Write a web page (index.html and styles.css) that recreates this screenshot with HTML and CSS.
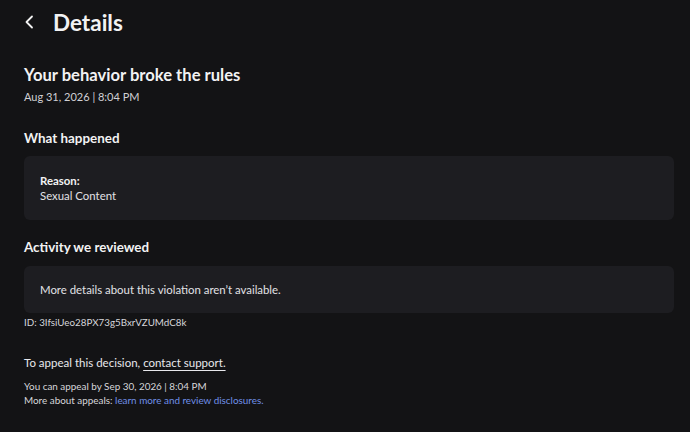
FILE: index.html
```html
<!DOCTYPE html>
<html lang="en">
<head>
<meta charset="utf-8">
<title>Details</title>
<link rel="stylesheet" href="styles.css">
</head>
<body>
<div class="page">
  <header class="topbar">
    <button class="back" aria-label="Back">
      <svg width="10" height="14" viewBox="0 0 10 14"><path d="M8 1.5 L2.5 7 L8 12.5" fill="none" stroke="#f2f2f2" stroke-width="1.8" stroke-linecap="round" stroke-linejoin="round"/></svg>
    </button>
    <h1 class="title">Details</h1>
  </header>

  <section class="summary">
    <h2 class="headline">Your behavior broke the rules</h2>
    <div class="date">Aug 31, 2026 | 8:04 PM</div>
  </section>

  <section class="block first">
    <h3 class="section-title">What happened</h3>
    <div class="card card-reason">
      <div class="label">Reason:</div>
      <div class="value">Sexual Content</div>
    </div>
  </section>

  <section class="block">
    <h3 class="section-title">Activity we reviewed</h3>
    <div class="card card-activity">More details about this violation aren’t available.</div>
    <div class="id">ID: 3IfsiUeo28PX73g5BxrVZUMdC8k</div>
  </section>

  <section class="appeal">
    <p class="appeal-main">To appeal this decision, <a class="support" href="#">contact support.</a></p>
    <p class="appeal-meta">You can appeal by Sep 30, 2026 | 8:04 PM<br>More about appeals: <a class="learn" href="#">learn more and review disclosures.</a></p>
  </section>
</div>
</body>
</html>
```
FILE: styles.css
```css
html, body {
  margin: 0;
  padding: 0;
  background: #131315;
  color: #f2f2f3;
  font-family: "Lato", "Inter", sans-serif;
}
.page {
  padding: 0 16px 0 24px;
}
.topbar {
  display: flex;
  align-items: center;
  height: 44px;
  gap: 18px;
}
.back {
  background: none;
  border: 0;
  padding: 0;
  display: flex;
  align-items: center;
  width: 11px;
  height: 14px;
}
.title {
  margin: 0;
  font-size: 22.5px;
  font-weight: 700;
}
.summary {
  margin-top: 20px;
}
.headline {
  margin: 0;
  font-size: 16.6px;
  font-weight: 700;
  line-height: 22px;
}
.date {
  margin-top: 3px;
  font-size: 11px;
  line-height: 16px;
  color: #d0d0d4;
}
.block {
  margin-top: 18px;
}
.block.first {
  margin-top: 24px;
}
.section-title {
  margin: 0;
  font-size: 13.4px;
  font-weight: 700;
  line-height: 18px;
}
.card {
  background: #1d1d21;
  border-radius: 6px;
  margin-top: 9px;
  font-size: 11.4px;
  color: #e2e2e6;
}
.card-reason {
  height: 64px;
  box-sizing: border-box;
  padding: 17px 16px;
  line-height: 15px;
}
.label {
  font-weight: 700;
  color: #f2f2f3;
}
.card-activity {
  margin-top: 10px;
  height: 47px;
  box-sizing: border-box;
  padding: 0 16px 1px;
  display: flex;
  align-items: center;
}
.id {
  margin-top: 2px;
  font-size: 9.8px;
  line-height: 15px;
  color: #d6d6da;
}
.appeal {
  margin-top: 24px;
}
.appeal-main {
  margin: 0;
  font-size: 11.5px;
  line-height: 18px;
  color: #e8e8ec;
}
.support {
  color: #e8e8ec;
  text-decoration: underline;
  text-underline-offset: 3px;
}
.appeal-meta {
  margin: 7px 0 0;
  font-size: 9.9px;
  line-height: 14px;
  color: #d6d6da;
}
.learn {
  color: #7090e8;
  text-decoration: none;
}
```
